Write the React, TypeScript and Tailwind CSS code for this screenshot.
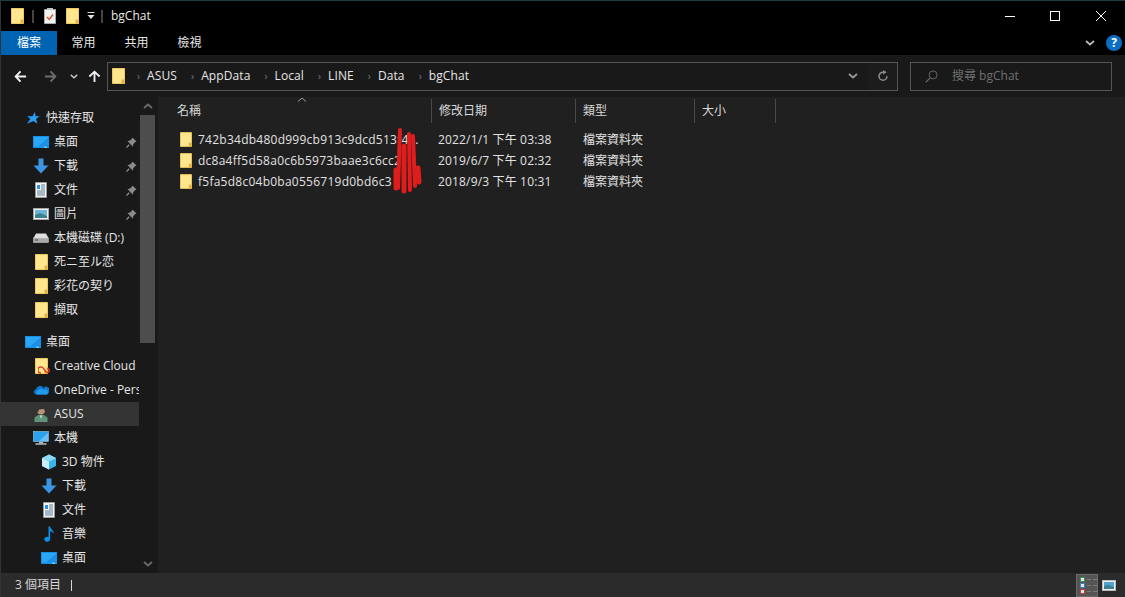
import React from "react";

const font = { fontFamily: '"Open Sans","Noto Sans CJK TC","Noto Sans",sans-serif' };

function Folder({ className = "w-[13px] h-[16px]" }: { className?: string }) {
  return (
    <svg viewBox="0 0 13 16" className={className + " shrink-0"}>
      <path d="M0.5 0.5H12.5V15.5H0.5Z" fill="#ffe68f" stroke="#f3c95a" />
      <path d="M9.5 15.5V11.5H12.5V15.5Z" fill="#e2b245" />
    </svg>
  );
}

function Pin() {
  return (
    <svg viewBox="0 0 12 12" className="w-[11px] h-[11px] shrink-0">
      <path d="M7 0.5L11.5 5L10 5.5L7.8 8.2L7.6 10.5L1.5 4.4L3.8 4.2L6.5 2Z" fill="#8a8a8a" />
      <path d="M3.5 8.5L0.5 11.5" stroke="#8a8a8a" strokeWidth="1.4" />
    </svg>
  );
}

function Desktop({ w = 16 }: { w?: number }) {
  return (
    <svg viewBox="0 0 16 12" width={w} height={(w * 12) / 16} className="shrink-0">
      <rect x="0" y="0" width="16" height="12" fill="#1390ea" />
      <rect x="1" y="1" width="14" height="9.5" fill="#2aa7f5" />
      <path d="M5 10.5L15 2V10.5Z" fill="#1c8fe6" />
      <rect x="11" y="10.8" width="3" height="0.8" fill="#cfe9fb" />
    </svg>
  );
}

function Down() {
  return (
    <svg viewBox="0 0 16 16" className="w-4 h-4 shrink-0">
      <path d="M5.5 0.5H10.5V7.5H15.5L8 15.5L0.5 7.5H5.5Z" fill="#3a95e4" />
    </svg>
  );
}

function Doc() {
  return (
    <svg viewBox="0 0 12 16" className="w-3 h-4 shrink-0">
      <path d="M0.5 0.5H11.5V15.5H0.5Z" fill="#f4f4f4" stroke="#9a9a9a" />
      <path d="M6 3H10M6 5H10M6 7H10M2 9H10M2 11H10M2 13H10" stroke="#5a7f9e" />
      <rect x="2" y="3" width="3" height="4" fill="#2b8fdd" />
    </svg>
  );
}

function Pic() {
  return (
    <svg viewBox="0 0 16 12" className="w-4 h-3 shrink-0">
      <rect x="0.5" y="0.5" width="15" height="11" fill="#f2f2f2" stroke="#a8a8a8" />
      <rect x="2" y="2" width="12" height="8" fill="#6eb4d9" />
      <path d="M2 7L7 5L14 8V10H2Z" fill="#3d7f8c" />
    </svg>
  );
}

function Drive() {
  return (
    <svg viewBox="0 0 16 10" className="w-4 h-[10px] shrink-0">
      <path d="M3 0.5H13L15.5 5H0.5Z" fill="#e0e0e0" />
      <rect x="0.5" y="5" width="15" height="4.5" fill="#a9a9a9" stroke="#cfcfcf" strokeWidth="0.5" />
      <rect x="2" y="6.5" width="3" height="1" fill="#444" />
    </svg>
  );
}

function Star() {
  return (
    <svg viewBox="0 0 16 16" className="w-[14px] h-[14px] shrink-0">
      <path d="M10 1L11 6H15.5L11.5 9L13 14.5L8.5 11.5L1 14.5L5 9L1.5 6H7.5Z" fill="#2a9df4" />
    </svg>
  );
}

function CreativeFolder() {
  return (
    <div className="relative shrink-0 w-[13px] h-4">
      <Folder />
      <svg viewBox="0 0 12 8" className="absolute left-[3px] top-[8px] w-[12px] h-2">
        <path d="M3 7A3 3 0 1 1 5.5 2.5L7.5 5.5A2 2 0 1 0 9 2.5" fill="none" stroke="#e3342f" strokeWidth="1.4" />
      </svg>
    </div>
  );
}

function Cloud() {
  return (
    <svg viewBox="0 0 16 10" className="w-4 h-[10px] shrink-0">
      <path d="M3 9.5A2.7 2.7 0 0 1 3 4.2A4 4 0 0 1 10.5 3A3.3 3.3 0 0 1 15.8 7.5A2.4 2.4 0 0 1 13.5 9.5Z" fill="#1173c9" />
      <path d="M4 9.5A2.2 2.2 0 0 1 5 5.5A3 3 0 0 1 10.5 5A2.3 2.3 0 0 1 14 9.5Z" fill="#1e9bea" />
    </svg>
  );
}

function User() {
  return (
    <svg viewBox="0 0 14 16" className="w-[14px] h-4 shrink-0">
      <path d="M0.5 16V11.5L4 9H10L13.5 11.5V16Z" fill="#5d9379" />
      <path d="M6 9.5H8L7 13Z" fill="#e8e8e8" />
      <circle cx="7" cy="4.8" r="3.8" fill="#b8957a" />
      <path d="M3 5A4 4 0 0 1 11 4.5L9.5 3L5 3.5L4 6.5Z" fill="#2f2f2f" />
    </svg>
  );
}

function Pc() {
  return (
    <svg viewBox="0 0 16 14" className="w-4 h-[14px] shrink-0">
      <rect x="0.5" y="0.5" width="15" height="10" fill="#2aa1ee" stroke="#9bc9ea" strokeWidth="0.6" />
      <path d="M6 10L15 2V10Z" fill="#6bc0f3" />
      <rect x="6" y="11" width="4" height="1.2" fill="#bdbdbd" />
      <rect x="2.5" y="12.4" width="11" height="1.2" fill="#e5e5e5" />
    </svg>
  );
}

function Cube() {
  return (
    <svg viewBox="0 0 16 16" className="w-4 h-4 shrink-0">
      <path d="M8 0.5L15 4V12L8 15.5L1 12V4Z" fill="#39b6e8" />
      <path d="M1 4L8 7.5V15.5L1 12Z" fill="#c9eef8" />
      <path d="M8 7.5L15 4L8 0.5L1 4Z" fill="#8fdcf2" />
    </svg>
  );
}

function Music() {
  return (
    <svg viewBox="0 0 12 16" className="w-3 h-4 shrink-0">
      <path d="M5.5 0.5H7C7.5 3 11 4 10.5 8C9.8 6.2 8.6 5.5 7.2 5.2V13A3 2.5 0 1 1 5.5 11Z" fill="#0f8ee8" />
    </svg>
  );
}

type Row = { label: string; icon: React.ReactNode; depth: number; pin?: boolean; sel?: boolean; gapTop?: boolean };

const navRows: Row[] = [
  { label: "快速存取", icon: <Star />, depth: 0 },
  { label: "桌面", icon: <Desktop />, depth: 1, pin: true },
  { label: "下載", icon: <Down />, depth: 1, pin: true },
  { label: "文件", icon: <Doc />, depth: 1, pin: true },
  { label: "圖片", icon: <Pic />, depth: 1, pin: true },
  { label: "本機磁碟 (D:)", icon: <Drive />, depth: 1 },
  { label: "死ニ至ル恋", icon: <Folder />, depth: 1 },
  { label: "彩花の契り", icon: <Folder />, depth: 1 },
  { label: "擷取", icon: <Folder />, depth: 1 },
  { label: "桌面", icon: <Desktop />, depth: 0, gapTop: true },
  { label: "Creative Cloud", icon: <CreativeFolder />, depth: 1 },
  { label: "OneDrive - Personal", icon: <Cloud />, depth: 1 },
  { label: "ASUS", icon: <User />, depth: 1, sel: true },
  { label: "本機", icon: <Pc />, depth: 1 },
  { label: "3D 物件", icon: <Cube />, depth: 2 },
  { label: "下載", icon: <Down />, depth: 2 },
  { label: "文件", icon: <Doc />, depth: 2 },
  { label: "音樂", icon: <Music />, depth: 2 },
  { label: "桌面", icon: <Desktop />, depth: 2 },
];

function NavRow({ r }: { r: Row }) {
  const pl = r.depth === 0 ? "pl-[24px]" : r.depth === 1 ? "pl-[32px]" : "pl-[40px]";
  return (
    <div className={`relative flex items-center h-6 shrink-0 w-[138px] overflow-hidden ${pl} ${r.gapTop ? "mt-2" : ""} ${r.sel ? "bg-[#333333]" : ""}`}>
      <span className="w-4 flex justify-center shrink-0">{r.icon}</span>
      <span className="ml-[5px] whitespace-nowrap text-[12px] text-[#e6e6e6]">{r.label}</span>
      {r.pin && (
        <span className="absolute right-[2px] top-[7px]">
          <Pin />
        </span>
      )}
    </div>
  );
}

const crumbs = ["ASUS", "AppData", "Local", "LINE", "Data", "bgChat"];

const columns = [
  { label: "名稱", w: "w-[262px]" },
  { label: "修改日期", w: "w-[144px]" },
  { label: "類型", w: "w-[119px]" },
  { label: "大小", w: "w-[81px]" },
];

const files = [
  { name: "742b34db480d999cb913c9dcd513f4...", date: "2022/1/1 下午 03:38" },
  { name: "dc8a4ff5d58a0c6b5973baae3c6cc2", date: "2019/6/7 下午 02:32" },
  { name: "f5fa5d8c04b0ba0556719d0bd6c3", date: "2018/9/3 下午 10:31" },
];

function Chevron({ className = "w-[10px] h-[6px]", up = false, color = "#9a9a9a" }: { className?: string; up?: boolean; color?: string }) {
  return (
    <svg viewBox="0 0 10 6" className={"shrink-0 " + className}>
      <path d={up ? "M1 5L5 1.5L9 5" : "M1 1L5 4.5L9 1"} fill="none" stroke={color} strokeWidth="1.8" />
    </svg>
  );
}

function Arrow({ color, flip = false }: { color: string; flip?: boolean }) {
  return (
    <svg viewBox="0 0 14 14" className={"w-[13px] h-[13px] shrink-0 " + (flip ? "rotate-180" : "")}>
      <path d="M13 7H2M7 1.5L1.8 7L7 12.5" fill="none" stroke={color} strokeWidth="2" />
    </svg>
  );
}

function DetailLine({ color }: { color: string }) {
  return (
    <div className="flex items-center gap-[2px]">
      <span className={`w-[5px] h-[5px] bg-[#e8e8e8] border ${color}`} />
      <span className="w-[4px] h-px bg-[#7a7a7a]" />
      <span className="w-[5px] h-px bg-[#7a7a7a]" />
    </div>
  );
}

export default function App() {
  return (
    <div
      style={font}
      className="w-[1125px] h-[597px] flex flex-col overflow-hidden bg-black border-t border-t-[#1d3b42] border-l border-l-[#333333] relative"
    >
      {/* Title bar */}
      <div className="h-[30px] flex items-center shrink-0 text-white">
        <div className="ml-[10px] flex items-center">
          <Folder />
          <span className="ml-[8px] w-[2px] h-[13px] bg-[#444]" />
          <svg viewBox="0 0 12 16" className="ml-[10px] w-3 h-4">
            <path d="M0.5 1.5H11.5V15.5H0.5Z" fill="#f2f2f2" stroke="#aaa" />
            <rect x="3" y="0" width="6" height="2" fill="#c4c4c4" />
            <path d="M3 9L5.2 11.5L9 6.5" fill="none" stroke="#e0512f" strokeWidth="1.4" />
          </svg>
          <span className="ml-[10px]">
            <Folder />
          </span>
          <svg viewBox="0 0 8 9" className="ml-[8px] w-2 h-[9px]">
            <rect x="0.5" y="0" width="7" height="1" fill="#e0e0e0" />
            <path d="M0.5 3H7.5L4 7Z" fill="#e0e0e0" />
          </svg>
          <span className="ml-[6px] w-[2px] h-[13px] bg-[#444]" />
          <span className="ml-[8px] text-[12px] text-[#e8e8e8]">bgChat</span>
        </div>
        <div className="ml-auto flex items-center h-full mr-px">
          <span className="w-[44px] h-full flex items-center justify-center">
            <span className="w-[10px] h-px bg-white" />
          </span>
          <span className="w-[46px] h-full flex items-center justify-center">
            <span className="w-[10px] h-[10px] border border-white" />
          </span>
          <span className="w-[46px] h-full flex items-center justify-center">
            <svg viewBox="0 0 10 10" className="w-[10px] h-[10px]">
              <path d="M0 0L10 10M10 0L0 10" stroke="#fff" strokeWidth="1" />
            </svg>
          </span>
        </div>
      </div>

      {/* Ribbon tabs */}
      <div className="h-6 flex items-center shrink-0">
        <div className="w-[56px] h-full bg-[#0063b1] flex items-center justify-center text-[12px] text-white">檔案</div>
        <div className="w-[53px] text-center text-[12px] text-[#e6e6e6]">常用</div>
        <div className="w-[53px] text-center text-[12px] text-[#e6e6e6]">共用</div>
        <div className="w-[53px] text-center text-[12px] text-[#e6e6e6]">檢視</div>
        <div className="ml-auto flex items-center mr-[3px]">
          <Chevron color="#b8b8b8" />
          <span className="ml-[11px] w-4 h-4 rounded-full bg-[#0b6ec5] flex items-center justify-center text-[12px] leading-none font-bold text-white">?</span>
        </div>
      </div>

      {/* Address bar */}
      <div className="h-[42px] bg-[#191919] flex items-center shrink-0">
        <div className="w-[106px] flex items-center shrink-0 pl-[13px]">
          <Arrow color="#f2f2f2" />
          <span className="ml-[17px] flex">
            <Arrow color="#6e6e6e" flip />
          </span>
          <Chevron className="ml-[13px] w-2 h-[5px]" color="#c8c8c8" />
          <svg viewBox="0 0 14 14" className="ml-[10px] w-[13px] h-[13px] rotate-90">
            <path d="M13 7H2M7 1.5L1.8 7L7 12.5" fill="none" stroke="#f2f2f2" strokeWidth="2" />
          </svg>
        </div>
        <div className="w-[791px] h-[29px] border border-[#555555] flex items-center pl-[4px] shrink-0">
          <Folder />
          <div className="flex items-center ml-[12px] text-[12px] text-[#e6e6e6] tracking-[0.1px]">
            {crumbs.map((c, i) => (
              <React.Fragment key={c + i}>
                <span className="text-[#7a7a7a] text-[10px] mr-[7px]">›</span>
                <span className="mr-[14px]">{c}</span>
              </React.Fragment>
            ))}
          </div>
          <div className="ml-auto flex items-center h-full">
            <Chevron />
            <span className="ml-[10px] w-[29px] h-full bg-[#1c1c1c] flex items-center justify-center">
              <svg viewBox="0 0 12 12" className="w-3 h-3">
                <path d="M10 6.2A4 4 0 1 1 6 2.2H9" fill="none" stroke="#8a8a8a" strokeWidth="1.6" />
                <path d="M6 0L9.5 2.2L6 4.4Z" fill="#8a8a8a" />
              </svg>
            </span>
          </div>
        </div>
        <div className="ml-[12px] w-[202px] h-[29px] border border-[#555555] flex items-center pl-[14px] shrink-0">
          <svg viewBox="0 0 14 14" className="w-[13px] h-[13px]">
            <circle cx="8.7" cy="5.3" r="4.3" fill="none" stroke="#6a6a6a" />
            <path d="M5.6 8.4L0.8 13.2" stroke="#6a6a6a" strokeWidth="1.2" />
          </svg>
          <span className="ml-[14px] text-[12px] text-[#6f6f6f]">搜尋 bgChat</span>
        </div>
      </div>

      {/* Main */}
      <div className="flex-1 flex min-h-0">
        <div className="w-[157px] bg-[#191919] shrink-0 flex overflow-hidden">
          <div className="w-[139px] pt-[9px] flex flex-col overflow-hidden shrink-0">
            {navRows.map((r, i) => (
              <NavRow key={i} r={r} />
            ))}
          </div>
          <div className="w-[15px] flex flex-col items-center shrink-0">
            <div className="h-[18px] flex items-center justify-center">
              <Chevron up color="#6a6a6a" />
            </div>
            <div className="w-full h-[228px] bg-[#4d4d4d]" />
            <div className="mt-auto h-[18px] flex items-center justify-center">
              <Chevron color="#6a6a6a" />
            </div>
          </div>
        </div>

        <div className="flex-1 bg-[#202020] relative overflow-hidden">
          <div className="h-[28px] flex items-center pl-[12px] relative">
            {columns.map((c) => (
              <div key={c.label} className={`${c.w} h-[24px] flex items-center pl-[7px] border-r border-r-[#4a4a4a] text-[12px] text-[#d9d9d9] shrink-0`}>
                {c.label}
              </div>
            ))}
            <svg viewBox="0 0 10 5" className="absolute left-[139px] top-0 w-[10px] h-[5px]">
              <path d="M1 4.5L5 1L9 4.5" fill="none" stroke="#9a9a9a" />
            </svg>
          </div>
          <div className="pt-1 pl-[22px] flex flex-col">
            {files.map((f) => (
              <div key={f.name} className="h-[21px] flex items-center text-[12px] text-[#e2e2e2]">
                <Folder className="w-3 h-[15px]" />
                <span className="ml-[6px] w-[240px] whitespace-nowrap overflow-hidden tracking-[0.25px]">{f.name}</span>
                <span className="w-[145px] whitespace-nowrap tracking-[0.16px]">{f.date}</span>
                <span>檔案資料夾</span>
              </div>
            ))}
          </div>
          {/* red scribble over the names */}
          <svg viewBox="390 125 35 72" className="absolute left-[232px] top-[28px] w-[35px] h-[72px]">
            <g fill="none" stroke="#e01c1c" strokeLinecap="round">
              <path d="M400 130L398 188" strokeWidth="4" />
              <path d="M404 146L404 191" strokeWidth="5" />
              <path d="M409 134L410 190" strokeWidth="4" />
              <path d="M413 136L415 186" strokeWidth="4" />
              <path d="M396 170L396 188" strokeWidth="5" />
              <path d="M418 168L419 182" strokeWidth="5" />
            </g>
          </svg>
        </div>
      </div>

      {/* Status bar */}
      <div className="h-6 bg-[#2b2b2b] flex items-center shrink-0 text-[12px] text-[#d6d6d6]">
        <span className="ml-[14px]">3 個項目</span>
        <span className="ml-[10px] w-px h-[11px] bg-[#d6d6d6]" />
        <div className="ml-auto flex items-center h-full mr-[9px]">
          <div className="w-[22px] h-[23px] bg-[#555555] border border-[#6a6a6a] flex flex-col items-start justify-center gap-px pl-[3px]">
            <DetailLine color="border-[#3b8f5a]" />
            <DetailLine color="border-[#3b7fc8]" />
            <DetailLine color="border-[#c83b3b]" />
          </div>
          <svg viewBox="0 0 14 11" className="ml-[4px] w-[14px] h-[11px]">
            <rect x="0.5" y="0.5" width="13" height="10" fill="#f0f0f0" stroke="#bbb" />
            <rect x="2" y="2" width="10" height="7" fill="#4fa3d4" />
            <path d="M2 6L6 5L12 7V9H2Z" fill="#3d7f8c" />
          </svg>
        </div>
      </div>
    </div>
  );
}
